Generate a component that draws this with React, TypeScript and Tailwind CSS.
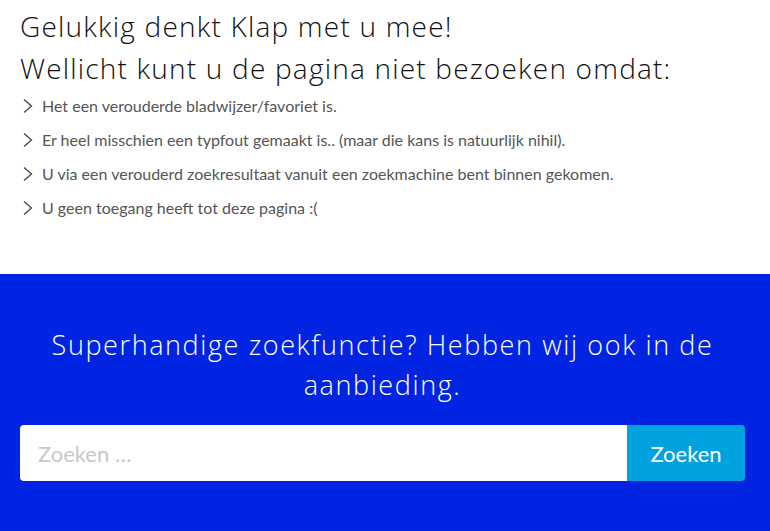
import React from 'react';

const reasons = [
  'Het een verouderde bladwijzer/favoriet is.',
  'Er heel misschien een typfout gemaakt is.. (maar die kans is natuurlijk nihil).',
  'U via een verouderd zoekresultaat vanuit een zoekmachine bent binnen gekomen.',
  'U geen toegang heeft tot deze pagina :(',
];

function Chevron() {
  return (
    <svg width="12" height="16" viewBox="0 0 12 16" className="shrink-0" fill="none">
      <path d="M2 1.5 L9.5 8 L2 14.5" stroke="#444" strokeWidth="1.3" />
    </svg>
  );
}

export default function App() {
  return (
    <div className="w-[770px] h-[531px] overflow-hidden bg-white">
      <section className="h-[274px] pl-[20px] pt-[5px]">
        <h2 className="font-['Open_Sans',sans-serif] font-light text-[28px] leading-[42px] tracking-[1.2px] text-[#111]">
          Gelukkig denkt Klap met u mee!
          <br />
          Wellicht kunt u de pagina niet bezoeken omdat:
        </h2>
        <ul className="font-['Lato',sans-serif] text-[16px] text-[#555]">
          {reasons.map((r) => (
            <li key={r} className="h-[34px] flex items-center gap-[8px] pl-[2px]">
              <Chevron />
              <span>{r}</span>
            </li>
          ))}
        </ul>
      </section>
      <section className="h-[257px] bg-[#0124e2] pt-[51px]">
        <div className="ml-[20px] mr-[25px]">
          <p className="px-[20px] text-center font-['Open_Sans',sans-serif] font-light text-[27px] leading-[40px] tracking-[1.6px] text-white">
            Superhandige zoekfunctie? Hebben wij ook in de aanbieding.
          </p>
          <form className="mt-[20px] flex h-[56px]" onSubmit={(e) => e.preventDefault()}>
            <input
              type="search"
              placeholder="Zoeken …"
              className="flex-1 min-w-0 bg-white rounded-l-[4px] pl-[18px] font-['Lato',sans-serif] text-[22px] text-[#333] placeholder:text-[#c8c8c8] outline-none"
            />
            <button
              type="submit"
              className="w-[118px] bg-[#00a3e0] rounded-r-[4px] font-['Lato',sans-serif] text-[22px] text-white"
            >
              Zoeken
            </button>
          </form>
        </div>
      </section>
    </div>
  );
}
